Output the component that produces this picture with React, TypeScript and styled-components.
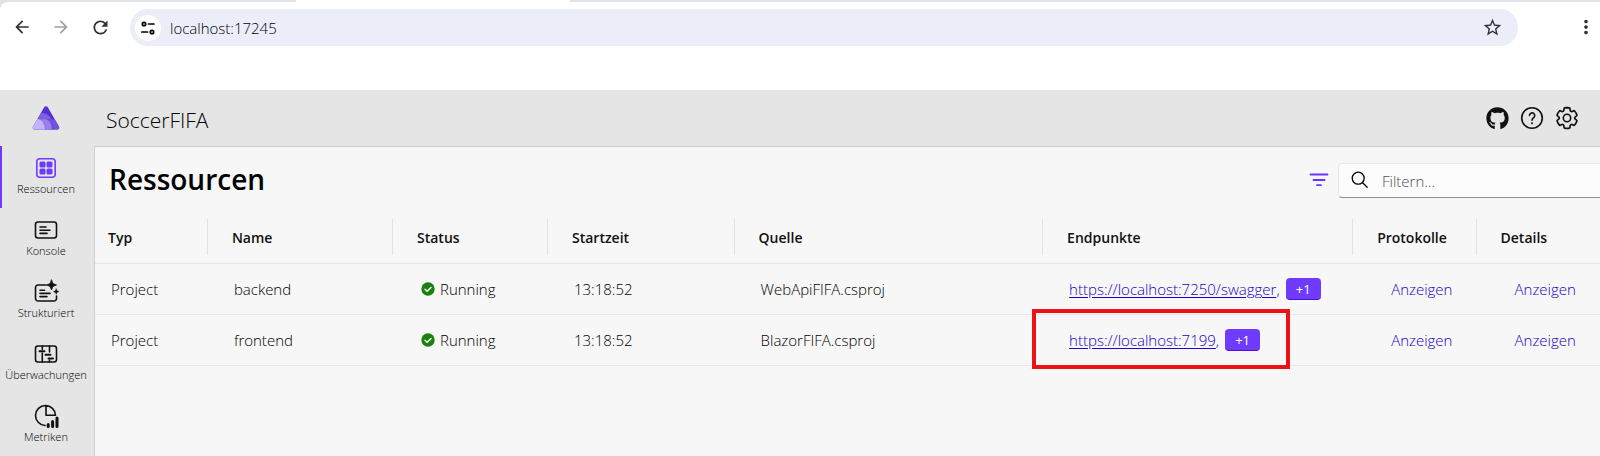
import React from "react";
import styled, { createGlobalStyle, css } from "styled-components";
import { FaGithub } from "react-icons/fa";
import { MdStarBorder, MdMoreVert, MdArrowBack, MdArrowForward, MdRefresh } from "react-icons/md";

const GlobalStyle = createGlobalStyle`
  *, *::before, *::after { box-sizing: border-box; }
  html, body, #root { min-height: 100vh; }
  body {
    margin: 0;
    background: #fff;
    color: #000;
    font-family: "Open Sans", "Noto Sans", sans-serif;
    font-size: 15px;
    line-height: 20px;
    overflow-x: hidden;
  }
  button, input { font: inherit; color: inherit; }
`;

const Page = styled.div`
  display: flex;
  flex-direction: column;
  min-height: 100vh;
`;

const BrowserBar = styled.div`
  display: flex;
  flex-direction: column;
  height: 90px;
  background: #dee3ea;
`;

const TabStrip = styled.div`
  height: 2px;
  padding-left: 296px;
`;

const ActiveTab = styled.div`
  width: 274px;
  height: 2px;
  background: #fff;
`;

const BrowserToolbar = styled.div`
  flex: 1;
  display: flex;
  align-items: flex-start;
  padding: 7px 0 0 8px;
  background: #fff;
  border-radius: 8px 0 0 0;
`;

const ToolButton = styled.button<{ $muted?: boolean }>`
  display: flex;
  align-items: center;
  justify-content: center;
  flex: none;
  width: 28px;
  height: 36px;
  margin-right: 11px;
  padding: 0;
  border: 0;
  background: none;
  color: ${(p) => (p.$muted ? "#a0a0a0" : "#303236")};
`;

const MenuButton = styled(ToolButton)`
  margin: 0 0 0 54px;
`;

const AddressBar = styled.div`
  flex: 1;
  display: flex;
  align-items: center;
  height: 37px;
  margin-left: 5px;
  padding: 0 4px 0 5px;
  border-radius: 18px;
  background: #ebeef8;
`;

const SiteInfo = styled.button`
  display: flex;
  align-items: center;
  justify-content: center;
  width: 26px;
  height: 26px;
  padding: 0;
  border: 0;
  border-radius: 50%;
  background: #fff;
`;

const AddressInput = styled.input`
  flex: 1;
  min-width: 0;
  padding: 0 0 0 9px;
  border: 0;
  outline: 0;
  background: none;
  font-size: 15px;
  font-weight: 300;
  color: #000;
`;

const StarButton = styled(ToolButton)`
  width: 44px;
  margin: 0;
`;

const Dashboard = styled.div`
  flex: 1;
  display: flex;
  flex-direction: column;
  background: #e5e5e5;
`;

const Header = styled.header`
  display: flex;
  align-items: center;
  height: 56px;
  padding-right: 21px;
`;

const LogoLink = styled.a`
  display: flex;
  justify-content: center;
  width: 92px;
`;

const AppName = styled.div`
  flex: 1;
  padding: 4px 0 0 14px;
  font-size: 21px;
  font-weight: 300;
  line-height: 28px;
  color: #000;
`;

const HeaderActions = styled.div`
  display: flex;
  gap: 11px;
`;

const HeaderButton = styled.button`
  display: flex;
  align-items: center;
  justify-content: center;
  width: 24px;
  height: 24px;
  padding: 0;
  border: 0;
  background: none;
  color: #111;
`;

const Body = styled.div`
  flex: 1;
  display: flex;
`;

const Nav = styled.nav`
  flex: none;
  display: flex;
  flex-direction: column;
  width: 94px;
`;

const NavLink = styled.a<{ $active?: boolean }>`
  display: flex;
  flex-direction: column;
  align-items: center;
  gap: 1px;
  height: 62px;
  padding: 10px 4px 0 0;
  border-left: 2px solid ${(p) => (p.$active ? "#6f3cff" : "transparent")};
  color: ${(p) => (p.$active ? "#6f3cff" : "#111")};
  text-decoration: none;
`;

const NavLabel = styled.span`
  font-size: 11px;
  font-weight: 300;
  line-height: 16px;
  color: #000;
  white-space: nowrap;
`;

const Main = styled.main`
  flex: 1;
  min-width: 0;
  border: 1px solid #cfcfcf;
  border-width: 1px 0 0 1px;
  background: #f7f7f7;
`;

const TitleRow = styled.div`
  display: flex;
  align-items: center;
  height: 66px;
  padding-left: 14px;
`;

const Title = styled.h1`
  flex: 1;
  margin: 0;
  padding-bottom: 2px;
  font-size: 28px;
  font-weight: 600;
  line-height: 40px;
  color: #000;
`;

const FilterButton = styled(HeaderButton)`
  margin-right: 7px;
  color: #6a35ff;
`;

const SearchBox = styled.label`
  display: flex;
  align-items: center;
  gap: 12px;
  width: 262px;
  height: 35px;
  padding-left: 11px;
  border: 1px solid #e6e6e6;
  border-right: 0;
  border-bottom-color: #8f8f8f;
  border-radius: 4px 0 0 4px;
  background: #fcfcfc;
`;

const SearchInput = styled.input`
  flex: 1;
  min-width: 0;
  padding: 1px 0 0;
  border: 0;
  outline: 0;
  background: none;
  font-weight: 300;
  &::placeholder { color: #505050; opacity: 1; }
`;

const Table = styled.table`
  width: 100%;
  table-layout: fixed;
  border-collapse: collapse;
`;

const Col = styled.col<{ $share: number }>`
  width: ${(p) => p.$share}%;
`;

const HeadCell = styled.th`
  height: 50px;
  padding: 6px 0 8px;
  border-bottom: 1px solid #e5e5e5;
  text-align: left;
  font-size: 14px;
  font-weight: 600;
  color: #111;
`;

const HeadLabel = styled.div<{ $first?: boolean; $last?: boolean }>`
  height: 36px;
  padding-left: ${(p) => (p.$first ? 13 : 24)}px;
  border-right: ${(p) => (p.$last ? "0" : "1px solid #e2e2e2")};
  line-height: 38px;
`;

const Cell = styled.td<{ $inset?: number }>`
  height: 51px;
  padding: 0 0 0 ${(p) => p.$inset ?? 26}px;
  border-bottom: 1px solid #e8e8e8;
  font-weight: 300;
  color: #000;
  white-space: nowrap;
`;

const Status = styled.span`
  display: flex;
  align-items: center;
  gap: 5px;
`;

const Endpoints = styled.span<{ $marked?: boolean }>`
  position: relative;
  display: inline-flex;
  align-items: center;
  gap: 6px;
  vertical-align: middle;
  color: #2400c8;
  ${(p) =>
    p.$marked &&
    css`
      &::after {
        content: "";
        position: absolute;
        inset: -20px -30px -18px -37px;
        border: 4px solid #ed1118;
        pointer-events: none;
      }
    `}
`;

const EndpointLink = styled.a`
  color: inherit;
  text-underline-offset: 2px;
`;

const MoreBadge = styled.button`
  width: 35px;
  height: 22px;
  padding: 0;
  border: 0;
  border-bottom: 1px solid #4a12d8;
  border-radius: 4px;
  background: #6f3cff;
  color: #fff;
  font-size: 13px;
  font-weight: 400;
  line-height: 20px;
`;

const ShowButton = styled.button`
  padding: 0;
  border: 0;
  background: none;
  color: #2400c8;
`;

const stroke = {
  fill: "none",
  stroke: "currentColor",
  strokeWidth: 1.6,
  strokeLinecap: "round" as const,
  strokeLinejoin: "round" as const,
};

const TuneIcon = () => (
  <svg width="16" height="16" viewBox="0 0 16 16" {...stroke} strokeWidth={1.7}>
    <circle cx="4" cy="4" r="1.7" />
    <path d="M8.5 4H14M1.8 12H7.5" />
    <circle cx="12" cy="12" r="1.7" />
  </svg>
);

const AspireLogo = () => (
  <svg width="28" height="26" viewBox="0 0 28 26">
    <clipPath id="aspire">
      <path d="M12 2.400a2.300 2.300 0 0 1 4 0L27 21.800a1.800 1.800 0 0 1-1.600 2.700H2.600A1.800 1.800 0 0 1 1 21.800Z" />
    </clipPath>
    <g clipPath="url(#aspire)">
      <path d="M0 0h28v26H0Z" fill="#5630d6" />
      <path d="M0 14.200h28V26H0Z" fill="#7350dd" />
      <path d="M0 8h11C15 8.500 18 11 19.200 14.200H0Z" fill="#7d5fe0" />
      <path d="M0 14.200h14.500C18 15.500 20 19 20.300 26H0Z" fill="#9b80e8" />
      <path d="M0 14.200h7.500C11 15.500 13.200 19 13.500 26H0Z" fill="#c4b4f5" />
      <path d="M14.500 14.200C18 15.500 20 19 20.300 26M7.500 14.200C11 15.500 13.200 19 13.500 26" fill="none" stroke="#5630d6" strokeOpacity=".45" strokeWidth=".7" />
    </g>
  </svg>
);

const ResourcesIcon = () => (
  <svg width="24" height="24" viewBox="0 0 24 24" {...stroke}>
    <rect x="2.800" y="2.800" width="18.400" height="18.400" rx="3" />
    <g fill="currentColor" stroke="none">
      <rect x="5.500" y="5.500" width="6" height="6" rx="1.500" />
      <rect x="12.500" y="5.500" width="6" height="6" rx="1.500" />
      <rect x="5.500" y="12.500" width="6" height="6" rx="1.500" />
      <rect x="12.500" y="12.500" width="6" height="6" rx="1.500" />
    </g>
  </svg>
);

const ConsoleIcon = () => (
  <svg width="24" height="24" viewBox="0 0 24 24" {...stroke}>
    <rect x="1.500" y="4" width="21" height="16" rx="2.500" />
    <path d="M6 9h6M6 12.200h10M6 15.400h7" />
  </svg>
);

const StructuredIcon = () => (
  <svg width="24" height="24" viewBox="0 0 24 24" {...stroke} overflow="visible">
    <path d="M12 5H4a2.500 2.500 0 0 0-2.500 2.500v11A2.500 2.500 0 0 0 4 21h16a2.500 2.500 0 0 0 2.500-2.500V16M6 10.200h4.500M6 13.400h10M6 16.600h7" />
    <path d="M17.500 0l1.400 3.600 3.600 1.400-3.600 1.400-1.400 3.600-1.400-3.600L12.500 5l3.600-1.400Z" fill="currentColor" strokeWidth=".8" />
    <path d="M22.200 8.800l.8 2 2 .8-2 .8-.8 2-.8-2-2-.8 2-.8Z" fill="currentColor" strokeWidth=".4" />
  </svg>
);

const TracesIcon = () => (
  <svg width="24" height="24" viewBox="0 0 24 24" {...stroke}>
    <rect x="1.500" y="4" width="21" height="16" rx="2.500" />
    <path d="M8.300 4v3.500M8.300 11v9M15.500 4v6M15.500 18v2" />
    <path d="M5.500 9.200h5M11.500 12.800h5M14.500 16.400h4.500" strokeWidth="2" />
  </svg>
);

const MetricsIcon = () => (
  <svg width="24" height="24" viewBox="0 0 24 24" {...stroke} overflow="visible">
    <path d="M11 21.500A10 10 0 1 1 21.500 11.200H12V1.500" />
    <path d="M14.200 22.500v-2M18.600 22.500v-5M23 22.500v-8.500" strokeWidth="3" />
  </svg>
);

const HelpIcon = () => (
  <svg width="24" height="24" viewBox="0 0 24 24" {...stroke}>
    <circle cx="12" cy="12" r="10.300" />
    <path d="M9.500 9.500a2.600 2.600 0 1 1 4.500 1.800c-1 1-2 1.500-2 2.900" />
    <circle cx="12" cy="17.200" r="1" fill="currentColor" stroke="none" />
  </svg>
);

const GearIcon = () => (
  <svg width="24" height="24" viewBox="0 0 24 24" {...stroke}>
    <path
      transform="translate(12 12) scale(1.06) translate(-12 -12)"
      d="M12.010 2.250c.735.008 1.466.093 2.183.253a.75.75 0 0 1 .582.649l.17 1.527a1.383 1.383 0 0 0 1.928 1.116l1.400-.615a.75.75 0 0 1 .850.174 9.792 9.792 0 0 1 2.204 3.792.75.75 0 0 1-.271.825l-1.242.916a1.381 1.381 0 0 0 0 2.226l1.243.915a.75.75 0 0 1 .272.826 9.797 9.797 0 0 1-2.204 3.792.75.75 0 0 1-.848.175l-1.407-.617a1.380 1.380 0 0 0-1.926 1.114l-.169 1.526a.75.75 0 0 1-.572.647 9.518 9.518 0 0 1-4.406 0 .75.75 0 0 1-.572-.647l-.168-1.524a1.382 1.382 0 0 0-1.926-1.110l-1.406.616a.75.75 0 0 1-.849-.175 9.798 9.798 0 0 1-2.204-3.796.75.75 0 0 1 .272-.826l1.243-.916a1.380 1.380 0 0 0 0-2.226l-1.243-.914a.75.75 0 0 1-.271-.826 9.793 9.793 0 0 1 2.204-3.792.75.75 0 0 1 .850-.174l1.400.615a1.387 1.387 0 0 0 1.930-1.118l.170-1.526a.75.75 0 0 1 .583-.650c.717-.159 1.450-.243 2.201-.252Z"
    />
    <circle cx="12" cy="12" r="3.700" />
  </svg>
);

const FilterIcon = () => (
  <svg width="20" height="20" viewBox="0 0 20 20" {...stroke} strokeWidth={1.800}>
    <path d="M1.500 4.500h17M4.500 10h11M8 15.200h4" />
  </svg>
);

const SearchIcon = () => (
  <svg width="20" height="20" viewBox="0 0 20 20" {...stroke} strokeWidth={1.300}>
    <circle cx="8.200" cy="8.200" r="6" />
    <path d="M12.700 12.700l4.500 4.500" />
  </svg>
);

const CheckIcon = () => (
  <svg width="14" height="14" viewBox="0 0 14 14">
    <circle cx="7" cy="7" r="6.700" fill="#1b8010" />
    <path d="M4 7.200l2.100 2.100L10 5.400" fill="none" stroke="#fff" strokeWidth="1.400" strokeLinecap="round" strokeLinejoin="round" />
  </svg>
);

const navItems = [
  { label: "Ressourcen", icon: <ResourcesIcon />, active: true },
  { label: "Konsole", icon: <ConsoleIcon /> },
  { label: "Strukturiert", icon: <StructuredIcon /> },
  { label: "Überwachungen", icon: <TracesIcon /> },
  { label: "Metriken", icon: <MetricsIcon /> },
];

const columns = [
  { label: "Typ", share: 7.5 },
  { label: "Name", share: 12.3 },
  { label: "Status", share: 10.3 },
  { label: "Startzeit", share: 12.4 },
  { label: "Quelle", share: 20.5 },
  { label: "Endpunkte", share: 20.6 },
  { label: "Protokolle", share: 8.2 },
  { label: "Details", share: 8.2 },
];

const resources = [
  { name: "backend", source: "WebApiFIFA.csproj", url: "https://localhost:7250/swagger", marked: false },
  { name: "frontend", source: "BlazorFIFA.csproj", url: "https://localhost:7199", marked: true },
];

export default function App() {
  return (
    <Page>
      <GlobalStyle />
      <BrowserBar>
        <TabStrip>
          <ActiveTab />
        </TabStrip>
        <BrowserToolbar>
          <ToolButton aria-label="Zurück"><MdArrowBack size={20} /></ToolButton>
          <ToolButton aria-label="Vorwärts" $muted><MdArrowForward size={20} /></ToolButton>
          <ToolButton aria-label="Neu laden"><MdRefresh size={21} /></ToolButton>
          <AddressBar>
            <SiteInfo aria-label="Websiteinformationen"><TuneIcon /></SiteInfo>
            <AddressInput aria-label="Adresse" defaultValue="localhost:17245" />
            <StarButton aria-label="Lesezeichen"><MdStarBorder size={21} /></StarButton>
          </AddressBar>
          <MenuButton aria-label="Menü"><MdMoreVert size={22} /></MenuButton>
        </BrowserToolbar>
      </BrowserBar>
      <Dashboard>
        <Header>
          <LogoLink href="#" aria-label="Startseite"><AspireLogo /></LogoLink>
          <AppName>SoccerFIFA</AppName>
          <HeaderActions>
            <HeaderButton aria-label="GitHub"><FaGithub size={23} /></HeaderButton>
            <HeaderButton aria-label="Hilfe"><HelpIcon /></HeaderButton>
            <HeaderButton aria-label="Einstellungen"><GearIcon /></HeaderButton>
          </HeaderActions>
        </Header>
        <Body>
          <Nav>
            {navItems.map((item) => (
              <NavLink key={item.label} href="#" $active={item.active}>
                {item.icon}
                <NavLabel>{item.label}</NavLabel>
              </NavLink>
            ))}
          </Nav>
          <Main>
            <TitleRow>
              <Title>Ressourcen</Title>
              <FilterButton aria-label="Filter"><FilterIcon /></FilterButton>
              <SearchBox>
                <SearchIcon />
                <SearchInput type="text" aria-label="Filtern" placeholder="Filtern..." />
              </SearchBox>
            </TitleRow>
            <Table>
              <colgroup>
                {columns.map((c) => <Col key={c.label} $share={c.share} />)}
              </colgroup>
              <thead>
                <tr>
                  {columns.map((c, i) => (
                    <HeadCell key={c.label} scope="col">
                      <HeadLabel $first={i === 0} $last={i === columns.length - 1}>{c.label}</HeadLabel>
                    </HeadCell>
                  ))}
                </tr>
              </thead>
              <tbody>
                {resources.map((r) => (
                  <tr key={r.name}>
                    <Cell $inset={16}>Project</Cell>
                    <Cell>{r.name}</Cell>
                    <Cell $inset={28}><Status><CheckIcon />Running</Status></Cell>
                    <Cell>13:18:52</Cell>
                    <Cell>{r.source}</Cell>
                    <Cell>
                      <Endpoints $marked={r.marked}>
                        <span><EndpointLink href={r.url}>{r.url}</EndpointLink>,</span>
                        <MoreBadge>+1</MoreBadge>
                      </Endpoints>
                    </Cell>
                    <Cell $inset={38}><ShowButton>Anzeigen</ShowButton></Cell>
                    <Cell $inset={38}><ShowButton>Anzeigen</ShowButton></Cell>
                  </tr>
                ))}
              </tbody>
            </Table>
          </Main>
        </Body>
      </Dashboard>
    </Page>
  );
}
